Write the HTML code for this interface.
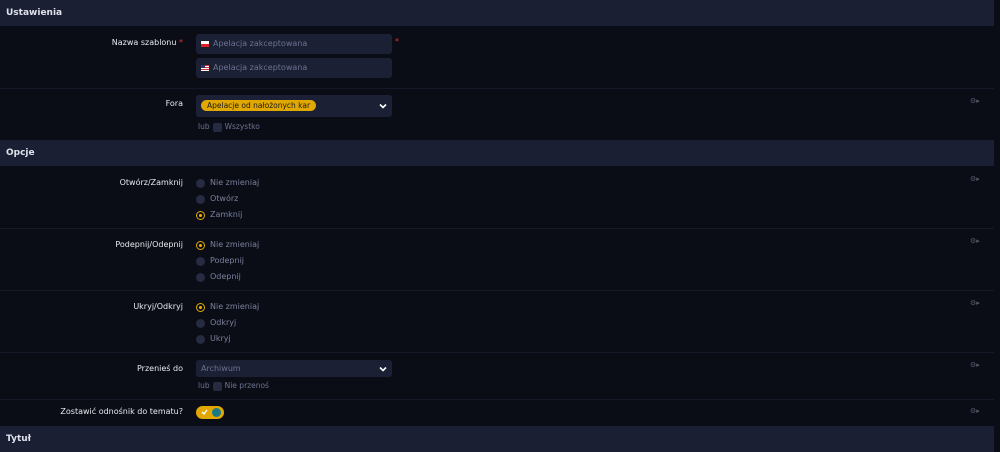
<!DOCTYPE html><html><head><style>
*{margin:0;padding:0;box-sizing:border-box}
body{width:1000px;height:450px;background:#0b0d16;font-family:"DejaVu Sans","Liberation Sans",sans-serif;font-size:8px;color:#e6e8ef;position:relative;overflow:hidden}
.a{position:absolute}
.h{left:0;width:994px;height:26px;background:#1a1f33;font-size:9px;font-weight:bold;padding:8px 6px;color:#dfe2ea}
.lbl{right:817px;text-align:right;white-space:nowrap;color:#e8eaf0}
.in{left:196px;width:196px;background:#1b2034;border-radius:3px;color:#6c7390;padding-left:17px;line-height:20px;height:20px}
.sep{left:0;width:994px;height:1px;background:#141827}
.r{left:196px;width:9px;height:9px;border-radius:50%;background:#262b42}
.r.on{background:#0b0d16;border:1.5px solid #e0a800}
.r.on::after{content:"";position:absolute;left:1.5px;top:1.5px;width:3px;height:3px;border-radius:50%;background:#f0b400}
.rt{left:210px;color:#7a819c}
.g{left:970px;width:14px;height:8px;color:#555b70;font-size:7px}
.cb{width:9px;height:9px;background:#262b42;border-radius:2px;display:inline-block;vertical-align:middle;margin:0 3px}
.sm{left:198px;color:#6c7390;font-size:7.5px}
.chev{position:absolute;right:5px;top:50%;margin-top:-3px}
</style></head><body>
<div class="a h" style="top:0">Ustawienia</div>
<div class="a lbl" style="top:38px">Nazwa szablonu <span style="color:#d33">*</span></div>
<div class="a in" style="top:34px"><span class="a" style="left:5px;top:7px;width:8px;height:6px;background:linear-gradient(#fff 50%,#d22 50%)"></span>Apelacja zakceptowana</div>
<div class="a" style="left:395px;top:37px;color:#d33">*</div>
<div class="a in" style="top:58px"><span class="a" style="left:5px;top:7px;width:8px;height:6px;background:repeating-linear-gradient(#c33 0 1px,#fff 1px 2px)"><span class="a" style="left:0;top:0;width:4px;height:3px;background:#336"></span></span>Apelacja zakceptowana</div>
<div class="a sep" style="top:88px"></div>
<div class="a lbl" style="top:99px">Fora</div>
<div class="a in" style="top:95px;height:22px;padding-left:5px;line-height:22px"><span style="background:#e0a800;color:#1a1a1a;border-radius:8px;padding:1px 6px;font-size:7.5px">Apelacje od nałożonych kar</span><svg class="chev" width="8" height="6" viewBox="0 0 8 6"><path d="M1 1.5L4 4.5L7 1.5" stroke="#fff" stroke-width="1.6" fill="none"/></svg></div>
<div class="a sm" style="top:122px">lub<span class="cb"></span>Wszystko</div>
<div class="a g" style="top:97px">⚙▸</div>
<div class="a h" style="top:140px">Opcje</div>
<div class="a lbl" style="top:178px">Otwórz/Zamknij</div>
<div class="a r" style="top:179px"></div><div class="a rt" style="top:178px">Nie zmieniaj</div>
<div class="a r" style="top:195px"></div><div class="a rt" style="top:194px">Otwórz</div>
<div class="a r on" style="top:211px"></div><div class="a rt" style="top:210px">Zamknij</div>
<div class="a g" style="top:175px">⚙▸</div>
<div class="a sep" style="top:228px"></div>
<div class="a lbl" style="top:240px">Podepnij/Odepnij</div>
<div class="a r on" style="top:241px"></div><div class="a rt" style="top:240px">Nie zmieniaj</div>
<div class="a r" style="top:257px"></div><div class="a rt" style="top:256px">Podepnij</div>
<div class="a r" style="top:273px"></div><div class="a rt" style="top:272px">Odepnij</div>
<div class="a g" style="top:237px">⚙▸</div>
<div class="a sep" style="top:290px"></div>
<div class="a lbl" style="top:302px">Ukryj/Odkryj</div>
<div class="a r on" style="top:303px"></div><div class="a rt" style="top:302px">Nie zmieniaj</div>
<div class="a r" style="top:319px"></div><div class="a rt" style="top:318px">Odkryj</div>
<div class="a r" style="top:335px"></div><div class="a rt" style="top:334px">Ukryj</div>
<div class="a g" style="top:299px">⚙▸</div>
<div class="a sep" style="top:352px"></div>
<div class="a lbl" style="top:364px">Przenieś do</div>
<div class="a in" style="top:360px;height:17px;line-height:17px;padding-left:5px">Archiwum<svg class="chev" width="8" height="6" viewBox="0 0 8 6"><path d="M1 1.5L4 4.5L7 1.5" stroke="#fff" stroke-width="1.6" fill="none"/></svg></div>
<div class="a sm" style="top:381px">lub<span class="cb"></span>Nie przenoś</div>
<div class="a g" style="top:361px">⚙▸</div>
<div class="a sep" style="top:399px"></div>
<div class="a lbl" style="top:407px">Zostawić odnośnik do tematu?</div>
<div class="a" style="left:196px;top:406px;width:28px;height:13px;border-radius:7px;background:#e0a800"><svg class="a" style="left:5px;top:3px" width="7" height="6" viewBox="0 0 7 6"><path d="M1 3L3 5L6 1" stroke="#fff" stroke-width="1.4" fill="none"/></svg><span class="a" style="left:16px;top:2px;width:9px;height:9px;border-radius:50%;background:#1a7a8a"></span></div>
<div class="a g" style="top:407px">⚙▸</div>
<div class="a h" style="top:426px">Tytuł</div>
</body></html>
